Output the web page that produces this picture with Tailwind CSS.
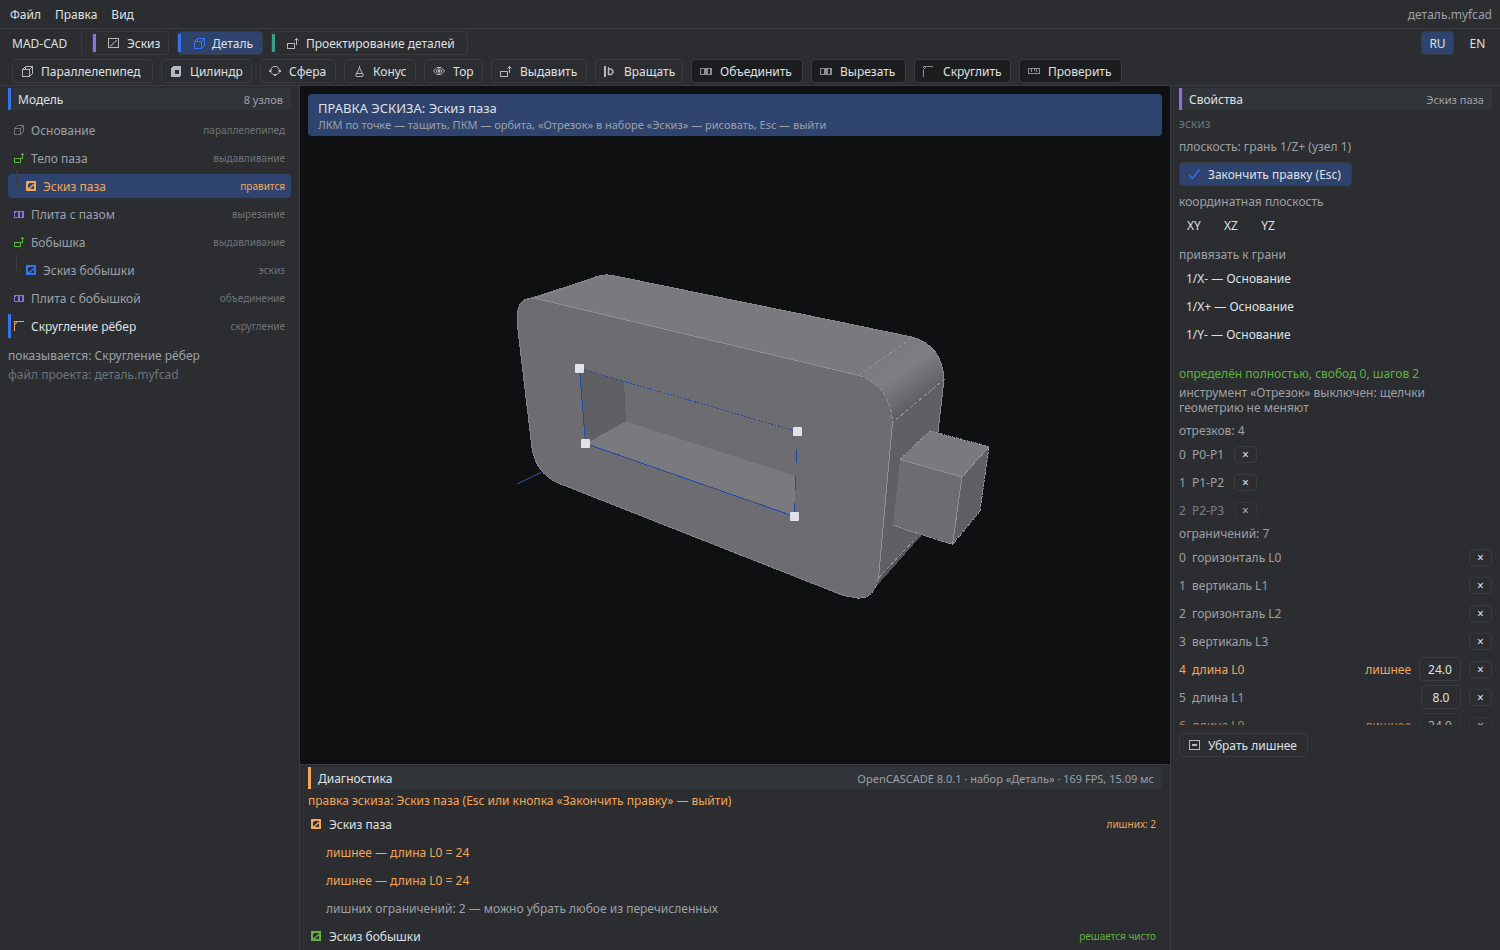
<!DOCTYPE html>
<html lang="ru">
  <head>
    <meta charset="UTF-8" />
    <meta name="viewport" content="width=device-width, initial-scale=1.0" />
    <script src="https://cdn.jsdelivr.net/npm/@tailwindcss/browser@4"></script>
    <title>MAD-CAD</title>
  </head>
  <body
    class="flex h-screen flex-col overflow-hidden bg-[#2b2d30] font-['Noto_Sans','Open_Sans',sans-serif] text-[12px] leading-[15px] text-[#dfe1e5]"
  >
    <!-- Icons -->
    <svg class="hidden">
      <symbol id="i-sketch" viewBox="0 0 12 12" fill="none">
        <path d="M.5 1.500h10v9H.5z" stroke="currentColor" shape-rendering="crispEdges" />
        <path d="M2 9l2-1 3-3.500 2-1" stroke="currentColor" />
      </symbol>
      <symbol id="i-sketch-bold" viewBox="0 0 10 10" fill="none">
        <path
          d="M0 0h10v10H0zM2 3v5h6V2H3z"
          fill="currentColor"
          fill-rule="evenodd"
          shape-rendering="crispEdges"
        />
        <path d="M2 7.500h1.500L7 4h1.500" stroke="currentColor" stroke-width="1.300" />
      </symbol>
      <symbol id="i-box" viewBox="0 0 12 12" fill="none">
        <path
          d="M1.500 4.500h7v7h-7zM4.500 1.500h7v7"
          stroke="currentColor"
          shape-rendering="crispEdges"
        />
        <path d="M1.500 4.500l3-3M8.500 4.500l3-3M8.500 11.500l3-3M4.500 2v2.500" stroke="currentColor" />
      </symbol>
      <symbol id="i-box-small" viewBox="0 0 10 10" fill="none">
        <path d="M.5 3.500h6v6h-6zM3.500.5h6v6" stroke="currentColor" shape-rendering="crispEdges" />
        <path d="M.5 3.500l3-3M6.500 3.500l3-3M6.500 9.500l3-3" stroke="currentColor" />
      </symbol>
      <symbol id="i-cylinder" viewBox="0 0 12 12" fill="none">
        <path
          d="M1 3l2-2h8v9l-2 2H1zM5 5v4h4V5z"
          fill="currentColor"
          fill-rule="evenodd"
          shape-rendering="crispEdges"
        />
      </symbol>
      <symbol id="i-sphere" viewBox="0 0 12 12" fill="none">
        <path d="M4 1.500h4L10 4v3.500L8 9.500H4L2 7.500V4z" stroke="currentColor" />
        <path d="M0 5h2v2H0zM10 5h2v2h-2zM5 9h2v2H5z" fill="currentColor" />
      </symbol>
      <symbol id="i-cone" viewBox="0 0 12 12" fill="none">
        <path
          d="M6.500 1v2M6.500 2.500L4.500 7 3 9v2l.5.5h6l.5-.5V9L8.500 7zM3.500 8.500h6"
          stroke="currentColor"
        />
      </symbol>
      <symbol id="i-torus" viewBox="0 0 12 12" fill="none">
        <path d="M.5 6L4 2.500h4L11.500 6 8 9.500H4z" stroke="currentColor" />
        <path d="M3 6l3-2.500L9 6 6 8.500z" stroke="currentColor" />
        <path d="M5 5h2v2H5z" fill="currentColor" />
      </symbol>
      <symbol id="i-extrude" viewBox="0 0 12 12" fill="none">
        <path d="M.5 6.500h7v5h-7zM9.500 1v7" stroke="currentColor" shape-rendering="crispEdges" />
        <path d="M7.500 3.500l2-2 2 2" stroke="currentColor" />
      </symbol>
      <symbol id="i-extrude-small" viewBox="0 0 10 10" fill="none">
        <path
          d="M0 5h7v5H0zM1 6v3h5V6zM7 6h2V2h1V1H9V0H8v1H7v1h1v3H7z"
          fill="currentColor"
          fill-rule="evenodd"
          shape-rendering="crispEdges"
        />
      </symbol>
      <symbol id="i-revolve" viewBox="0 0 12 12" fill="none">
        <path d="M0 1h2v11H0zM4 2h1v8H4z" fill="currentColor" shape-rendering="crispEdges" />
        <path d="M4.500 4h2.500l2 2v1.500l-2 2H4.500z" stroke="currentColor" stroke-width="1.500" />
      </symbol>
      <symbol id="i-bool" viewBox="0 0 12 12" fill="none">
        <path
          d="M0 3h12v7H0zM1 4v5h3V4zM8 4v5h2V4z"
          fill="currentColor"
          fill-rule="evenodd"
          shape-rendering="crispEdges"
        />
      </symbol>
      <symbol id="i-bool-small" viewBox="0 0 10 10" fill="none">
        <path
          d="M0 2h10v7H0zM1 4v4h3V3H2zM6 3v5h2V3z"
          fill="currentColor"
          fill-rule="evenodd"
          shape-rendering="crispEdges"
        />
      </symbol>
      <symbol id="i-fillet" viewBox="0 0 12 12" fill="none">
        <path d="M.5 12V4.500l3-3H10M.5 3V1.500H3" stroke="currentColor" />
      </symbol>
      <symbol id="i-fillet-small" viewBox="0 0 10 10" fill="none">
        <path d="M.5 10V4l3-3.500H10M.5 3V.5H3" stroke="currentColor" />
      </symbol>
      <symbol id="i-measure" viewBox="0 0 12 12" fill="none">
        <path
          d="M.5 3.500h11v5H.5zM3.500 4v3M6.500 4v2M8.500 4v3"
          stroke="currentColor"
          shape-rendering="crispEdges"
        />
      </symbol>
      <symbol id="i-check" viewBox="0 0 12 12" fill="none">
        <path d="M1 7l3.500 3.500L11.500 1.500" stroke="currentColor" stroke-width="1.300" />
      </symbol>
      <symbol id="i-minus" viewBox="0 0 12 12" fill="none">
        <path
          d="M1 1h11v10H1zM2 2v8h9V2zM4 5h5v2H4z"
          fill="currentColor"
          fill-rule="evenodd"
          shape-rendering="crispEdges"
        />
        <path d="M4 5h5v2H4z" fill="currentColor" shape-rendering="crispEdges" />
      </symbol>
    </svg>

    <!-- Menu -->
    <header class="flex h-[29px] shrink-0 items-center gap-[14px] border-b border-[#393b40] pr-2 pl-[10px]">
      <button>Файл</button>
      <button>Правка</button>
      <button>Вид</button>
      <span class="ml-auto text-[#9da0a8]">деталь.myfcad</span>
    </header>

    <!-- Workbenches and tools -->
    <div class="shrink-0 border-b border-[#393b40] pt-[2px] pb-[2px]">
      <div class="flex h-6 items-center gap-2 pr-[7px] pl-3">
        <span class="flex h-6 w-[70px] shrink-0 items-center border-r border-[#393b40]">MAD-CAD</span>
        <nav class="ml-[2px] flex gap-2">
          <button class="flex h-6 w-[77px] items-center rounded border border-[#393b40]">
            <i class="h-[18px] w-[3px] bg-[#8f6ce8]"></i>
            <svg class="mr-[7px] ml-3 size-3 text-[#b4b8bf]"><use href="#i-sketch" /></svg>Эскиз
          </button>
          <button class="flex h-6 w-[86px] items-center rounded border border-[#393b40] bg-[#2e436e]">
            <i class="h-[18px] w-[3px] bg-[#3574f0]"></i>
            <svg class="mr-[7px] ml-3 size-3 text-[#3574f0]"><use href="#i-box" /></svg>Деталь
          </button>
          <button class="flex h-6 w-[197px] items-center rounded border border-[#393b40]">
            <i class="h-[18px] w-[3px] bg-[#36a18b]"></i>
            <svg class="mr-[7px] ml-3 size-3 text-[#b4b8bf]"><use href="#i-extrude" /></svg>Проектирование деталей
          </button>
        </nav>
        <div class="ml-auto flex gap-2">
          <button class="h-6 w-[33px] rounded border border-[#393b40] bg-[#2e436e]">RU</button>
          <button class="h-6 w-[31px]">EN</button>
        </div>
      </div>
      <div class="mt-1 flex h-6 gap-2 pl-3">
        <button class="flex w-[141px] items-center gap-2 rounded border border-[#393b40] pl-2">
          <svg class="size-3 text-[#b4b8bf]"><use href="#i-box" /></svg>Параллелепипед
        </button>
        <button class="flex w-[91px] items-center gap-2 rounded border border-[#393b40] pl-2">
          <svg class="size-3 text-[#b4b8bf]"><use href="#i-cylinder" /></svg>Цилиндр
        </button>
        <button class="flex w-[76px] items-center gap-2 rounded border border-[#393b40] pl-2">
          <svg class="size-3 text-[#b4b8bf]"><use href="#i-sphere" /></svg>Сфера
        </button>
        <button class="flex w-[72px] items-center gap-2 rounded border border-[#393b40] pl-2">
          <svg class="size-3 text-[#b4b8bf]"><use href="#i-cone" /></svg>Конус
        </button>
        <button class="flex w-[59px] items-center gap-2 rounded border border-[#393b40] pl-2">
          <svg class="size-3 text-[#b4b8bf]"><use href="#i-torus" /></svg>Тор
        </button>
        <button class="flex w-[96px] items-center gap-2 rounded border border-[#393b40] pl-2">
          <svg class="size-3 text-[#b4b8bf]"><use href="#i-extrude" /></svg>Выдавить
        </button>
        <button class="flex w-[88px] items-center gap-2 rounded border border-[#393b40] pl-2">
          <svg class="size-3 text-[#b4b8bf]"><use href="#i-revolve" /></svg>Вращать
        </button>
        <button class="flex w-[112px] items-center gap-2 rounded border border-[#393b40] bg-[#1c1d1e] pl-2">
          <svg class="size-3 text-[#8c8e92]"><use href="#i-bool" /></svg>Объединить
        </button>
        <button class="flex w-[95px] items-center gap-2 rounded border border-[#393b40] bg-[#1c1d1e] pl-2">
          <svg class="size-3 text-[#8c8e92]"><use href="#i-bool" /></svg>Вырезать
        </button>
        <button class="flex w-[97px] items-center gap-2 rounded border border-[#393b40] bg-[#1c1d1e] pl-2">
          <svg class="size-3 text-[#8c8e92]"><use href="#i-fillet" /></svg>Скруглить
        </button>
        <button class="flex w-[103px] items-center gap-2 rounded border border-[#393b40] bg-[#1c1d1e] pl-2">
          <svg class="size-3 text-[#8c8e92]"><use href="#i-measure" /></svg>Проверить
        </button>
      </div>
    </div>

    <div class="flex min-h-0 flex-1">
      <!-- Model tree -->
      <aside class="w-[300px] shrink-0 border-r border-[#393b40] pt-[2px] pr-2 pl-2">
        <h2 class="flex h-[22px] items-center justify-between border-l-3 border-[#3574f0] bg-[#313438] pr-2 pl-[7px]">
          Модель<span class="text-[11px] text-[#9da0a8]">8 узлов</span>
        </h2>
        <ul class="mt-2 flex flex-col gap-1 text-[#9da0a8]">
          <li class="flex h-6 items-center pr-[6px] pl-[6px]">
            <svg class="mr-[7px] size-[10px] text-[#6f737a]"><use href="#i-box-small" /></svg>Основание
            <span class="ml-auto text-[10px] text-[#6f737a]">параллелепипед</span>
          </li>
          <li class="flex h-6 items-center pr-[6px] pl-[6px]">
            <svg class="mr-[7px] size-[10px] text-[#5fb33e]"><use href="#i-extrude-small" /></svg>Тело паза
            <span class="ml-auto text-[10px] text-[#6f737a]">выдавливание</span>
          </li>
          <li class="relative flex h-6 items-center rounded bg-[#2e436e] pr-[6px] pl-[18px] text-[#f2a65a]">
            <i class="absolute -top-1 left-2 h-[17px] w-[5px] border-b border-l border-[#393b40]"></i>
            <svg class="mr-[7px] size-[10px]"><use href="#i-sketch-bold" /></svg>Эскиз паза
            <span class="ml-auto text-[10px]">правится</span>
          </li>
          <li class="flex h-6 items-center pr-[6px] pl-[6px]">
            <svg class="mr-[7px] size-[10px] text-[#8f6ce8]"><use href="#i-bool-small" /></svg>Плита с пазом
            <span class="ml-auto text-[10px] text-[#6f737a]">вырезание</span>
          </li>
          <li class="flex h-6 items-center pr-[6px] pl-[6px]">
            <svg class="mr-[7px] size-[10px] text-[#5fb33e]"><use href="#i-extrude-small" /></svg>Бобышка
            <span class="ml-auto text-[10px] text-[#6f737a]">выдавливание</span>
          </li>
          <li class="relative flex h-6 items-center pr-[6px] pl-[18px]">
            <i class="absolute -top-1 left-2 h-[17px] w-[5px] border-b border-l border-[#393b40]"></i>
            <svg class="mr-[7px] size-[10px] text-[#3574f0]"><use href="#i-sketch-bold" /></svg>Эскиз бобышки
            <span class="ml-auto text-[10px] text-[#6f737a]">эскиз</span>
          </li>
          <li class="flex h-6 items-center pr-[6px] pl-[6px]">
            <svg class="mr-[7px] size-[10px] text-[#8f6ce8]"><use href="#i-bool-small" /></svg>Плита с бобышкой
            <span class="ml-auto text-[10px] text-[#6f737a]">объединение</span>
          </li>
          <li class="flex h-6 items-center border-l-3 border-[#3574f0] pr-[6px] pl-[3px] text-[#dfe1e5]">
            <svg class="mr-[7px] size-[10px] text-[#f2a65a]"><use href="#i-fillet-small" /></svg>Скругление рёбер
            <span class="ml-auto text-[10px] text-[#6f737a]">скругление</span>
          </li>
        </ul>
        <p class="mt-[10px] text-[#9da0a8]">показывается: Скругление рёбер</p>
        <p class="mt-1 text-[#6f737a]">файл проекта: деталь.myfcad</p>
      </aside>

      <main class="flex min-w-0 flex-1 flex-col">
        <!-- Viewport -->
        <div class="relative min-h-0 flex-1 bg-[#0f1012]">
          <svg
            class="absolute inset-0 size-full"
            viewBox="300 86 870 678"
            preserveAspectRatio="xMidYMid slice"
            fill="none"
            stroke-linejoin="round"
          >
            <defs>
              <linearGradient id="fillet" gradientUnits="userSpaceOnUse" x1="886" y1="356" x2="918" y2="401">
                <stop offset="0" stop-color="#7b7a7f" />
                <stop offset="0.4" stop-color="#7f7e83" />
                <stop offset="1" stop-color="#605f64" />
              </linearGradient>
            </defs>
            <path d="M517 484l25-12" stroke="#2f5aa8" />
            <g shape-rendering="crispEdges">
              <path
                d="M892.500 422.500L944 379.500 938 433 921 535 873 590 878.500 578z"
                fill="#605f64"
              />
              <path d="M878.500 578L917 536h4l-48 54z" fill="#545358" />
              <path
                d="M525 299.500L597 276.500q8-3 18-.5L830 320l82 17-53 38.500z"
                fill="#7a797e"
              />
              <path
                d="M859 375.500L912 337q30 8 32 42.500L892.500 422.500q-2-36-33.500-47z"
                fill="url(#fillet)"
              />
              <path
                d="M536 298.500L859 375.500q31.500 11 33.500 47L878.500 578q-5 22-22 20-7 0-15-3L558 483q-22-10-26-35L517.500 326q-2-25 10-27z"
                fill="#6d6c70"
              />
              <path d="M579.500 368.500L624 381.500l2 40-40.500 22z" fill="#605f64" />
              <path d="M585.500 443.500L626 421.500 795.500 476l-1 40z" fill="#7a797e" />
              <path d="M900 459.500L930 431l59 15.500-27 30.500z" fill="#7a797e" />
              <path d="M900 459.500L962 477l-9.500 67.500-59.500-19z" fill="#6d6c70" />
              <path d="M962 477l27-30.500-9 64.500-27.500 33.500z" fill="#605f64" />
            </g>
            <g stroke="#919095" shape-rendering="crispEdges">
              <path d="M536 298.500L859 375.500M892.500 422.500L878.500 578" />
              <path d="M900 459.500L962 477l27-30.500M962 477l-9.500 67.500" />
              <path
                d="M858 597.500q-8 0-16-2.500L558 483q-22-10-26-35L517.500 326q-2-25 10-27l9-1"
                stroke="#838287"
              />
              <path
                d="M532 299L597 276.500q8-3 18-.5L830 320l82 17q30 8 32 42.500L938 432"
                stroke="#88878c"
              />
              <path
                d="M859 375.500L913 337M859 375.500q31.500 11 33.500 47L944 379.500M878.500 578L917 537M878.500 578q-5 22-22 20"
                stroke-dasharray="4 2"
              />
              <path
                d="M900 459.500L930 431l59 15.500-9 64.500-27.500 33.500-59.500-19"
                stroke-dasharray="3 1"
              />
            </g>
            <g stroke="#1f4aa8" shape-rendering="crispEdges">
              <path d="M579.500 368.500l6 75L794.500 516.500" />
              <path d="M579.500 368.500L797.500 431.500" stroke-dasharray="2 1.500" />
              <path d="M796.500 449v14M795.500 476v14M794.500 503v10" />
            </g>
            <g fill="#e2e3e7">
              <rect x="575" y="364" width="9" height="9" rx="1" />
              <rect x="581" y="439" width="9" height="9" rx="1" />
              <rect x="793" y="427" width="9" height="9" rx="1" />
              <rect x="790" y="512" width="9" height="9" rx="1" />
            </g>
          </svg>
          <div class="relative mx-2 top-2 h-[42px] rounded bg-[#2e436e] px-[10px] pt-[6px]">
            <p class="text-[13px] leading-[17px]">ПРАВКА ЭСКИЗА: Эскиз паза</p>
            <p class="text-[11px] text-[#9da0a8]">
              ЛКМ по точке — тащить, ПКМ — орбита, «Отрезок» в наборе «Эскиз» — рисовать, Esc — выйти
            </p>
          </div>
        </div>

        <!-- Diagnostics -->
        <section class="h-[186px] shrink-0 overflow-hidden border-t border-[#393b40] px-2 pt-[2px]">
          <h2 class="flex h-[22px] items-center justify-between border-l-3 border-[#f2a65a] bg-[#313438] pr-2 pl-[7px]">
            Диагностика
            <span class="text-[11px] text-[#9da0a8]">OpenCASCADE 8.0.1 · набор «Деталь» · 169 FPS, 15.09 мс</span>
          </h2>
          <p class="mt-1 text-[#f2a65a]">правка эскиза: Эскиз паза (Esc или кнопка «Закончить правку» — выйти)</p>
          <ul class="mt-1 flex flex-col gap-1">
            <li class="flex h-6 items-center pr-[6px] pl-[3px]">
              <svg class="mr-2 size-[10px] text-[#f2a65a]"><use href="#i-sketch-bold" /></svg>Эскиз паза
              <span class="ml-auto text-[10px] text-[#f2a65a]">лишних: 2</span>
            </li>
            <li class="flex h-6 items-center pl-[18px] text-[#f2a65a]">лишнее — длина L0 = 24</li>
            <li class="flex h-6 items-center pl-[18px] text-[#f2a65a]">лишнее — длина L0 = 24</li>
            <li class="flex h-6 items-center pl-[18px] text-[#9da0a8]">
              лишних ограничений: 2 — можно убрать любое из перечисленных
            </li>
            <li class="flex h-6 items-center pr-[6px] pl-[3px]">
              <svg class="mr-2 size-[10px] text-[#5fb33e]"><use href="#i-sketch-bold" /></svg>Эскиз бобышки
              <span class="ml-auto text-[10px] text-[#5fb33e]">решается чисто</span>
            </li>
          </ul>
        </section>
      </main>

      <!-- Properties -->
      <aside class="w-[330px] shrink-0 border-l border-[#393b40] pt-[2px] pr-2 pl-2 text-[#9da0a8]">
        <h2 class="flex h-[22px] items-center justify-between border-l-3 border-[#8f6ce8] bg-[#313438] pr-2 pl-[7px] text-[#dfe1e5]">
          Свойства<span class="text-[11px] text-[#9da0a8]">Эскиз паза</span>
        </h2>
        <p class="mt-[6px] text-[#6f737a]">эскиз</p>
        <p class="mt-2">плоскость: грань 1/Z+ (узел 1)</p>
        <button class="mt-2 flex h-6 w-[173px] items-center gap-2 rounded border border-[#393b40] bg-[#2e436e] pl-2 text-[#dfe1e5]">
          <svg class="size-3 text-[#3574f0]"><use href="#i-check" /></svg>Закончить правку (Esc)
        </button>
        <p class="mt-2">координатная плоскость</p>
        <div class="mt-1 flex gap-[7px] text-[#dfe1e5]">
          <button class="h-6 w-[30px]">XY</button>
          <button class="h-6 w-[30px]">XZ</button>
          <button class="h-6 w-[30px]">YZ</button>
        </div>
        <p class="mt-[10px]">привязать к грани</p>
        <div class="mt-1 flex flex-col items-start gap-1 pl-[7px] text-[#dfe1e5]">
          <button class="h-6">1/X- — Основание</button>
          <button class="h-6">1/X+ — Основание</button>
          <button class="h-6">1/Y- — Основание</button>
        </div>
        <p class="mt-5 text-[#5fb33e]">определён полностью, свобод 0, шагов 2</p>
        <p class="mt-1">инструмент «Отрезок» выключен: щелчки<br />геометрию не меняют</p>
        <p class="mt-2">отрезков: 4</p>
        <ul class="mt-1 flex h-[76px] flex-col gap-1 overflow-hidden">
          <li class="flex h-6 shrink-0 items-center">
            <span class="w-[13px]">0</span><span class="w-[42px]">P0-P1</span>
            <button class="h-[17px] w-[23px] rounded border border-[#393b40] leading-[15px] text-[#dfe1e5]">×</button>
          </li>
          <li class="flex h-6 shrink-0 items-center">
            <span class="w-[13px]">1</span><span class="w-[42px]">P1-P2</span>
            <button class="h-[17px] w-[23px] rounded border border-[#393b40] leading-[15px] text-[#dfe1e5]">×</button>
          </li>
          <li class="flex h-6 shrink-0 items-center opacity-70">
            <span class="w-[13px]">2</span><span class="w-[42px]">P2-P3</span>
            <button class="h-[17px] w-[23px] rounded border border-[#393b40] leading-[15px] text-[#dfe1e5]">×</button>
          </li>
        </ul>
        <p class="mt-2">ограничений: 7</p>
        <ul class="mt-1 flex h-[180px] flex-col gap-1 overflow-hidden">
          <li class="flex h-6 shrink-0 items-center">
            <span class="w-[13px]">0</span>горизонталь L0
            <button class="ml-auto h-[17px] w-[23px] rounded border border-[#393b40] leading-[15px] text-[#dfe1e5]">×</button>
          </li>
          <li class="flex h-6 shrink-0 items-center">
            <span class="w-[13px]">1</span>вертикаль L1
            <button class="ml-auto h-[17px] w-[23px] rounded border border-[#393b40] leading-[15px] text-[#dfe1e5]">×</button>
          </li>
          <li class="flex h-6 shrink-0 items-center">
            <span class="w-[13px]">2</span>горизонталь L2
            <button class="ml-auto h-[17px] w-[23px] rounded border border-[#393b40] leading-[15px] text-[#dfe1e5]">×</button>
          </li>
          <li class="flex h-6 shrink-0 items-center">
            <span class="w-[13px]">3</span>вертикаль L3
            <button class="ml-auto h-[17px] w-[23px] rounded border border-[#393b40] leading-[15px] text-[#dfe1e5]">×</button>
          </li>
          <li class="flex h-6 shrink-0 items-center gap-2 text-[#f2a65a]">
            <label for="len4" class="flex"><span class="w-[13px]">4</span>длина L0</label>
            <span class="ml-auto">лишнее</span>
            <input id="len4" value="24.0" class="h-6 w-[42px] rounded border border-[#393b40] text-center text-[#dfe1e5]" />
            <button class="h-[17px] w-[23px] rounded border border-[#393b40] leading-[15px] text-[#dfe1e5]">×</button>
          </li>
          <li class="flex h-6 shrink-0 items-center gap-2">
            <label for="len5" class="flex"><span class="w-[13px]">5</span>длина L1</label>
            <input id="len5" value="8.0" class="ml-auto h-6 w-10 rounded border border-[#393b40] text-center text-[#dfe1e5]" />
            <button class="h-[17px] w-[23px] rounded border border-[#393b40] leading-[15px] text-[#dfe1e5]">×</button>
          </li>
          <li class="flex h-6 shrink-0 items-center gap-2 text-[#f2a65a] opacity-70">
            <label for="len6" class="flex"><span class="w-[13px]">6</span>длина L0</label>
            <span class="ml-auto">лишнее</span>
            <input id="len6" value="24.0" class="h-6 w-[42px] rounded border border-[#393b40] text-center text-[#dfe1e5]" />
            <button class="h-[17px] w-[23px] rounded border border-[#393b40] leading-[15px] text-[#dfe1e5]">×</button>
          </li>
        </ul>
        <button class="mt-2 flex h-6 w-[129px] items-center gap-2 rounded border border-[#393b40] pl-2 text-[#dfe1e5]">
          <svg class="size-3 text-[#b4b8bf]"><use href="#i-minus" /></svg>Убрать лишнее
        </button>
      </aside>
    </div>
  </body>
</html>
